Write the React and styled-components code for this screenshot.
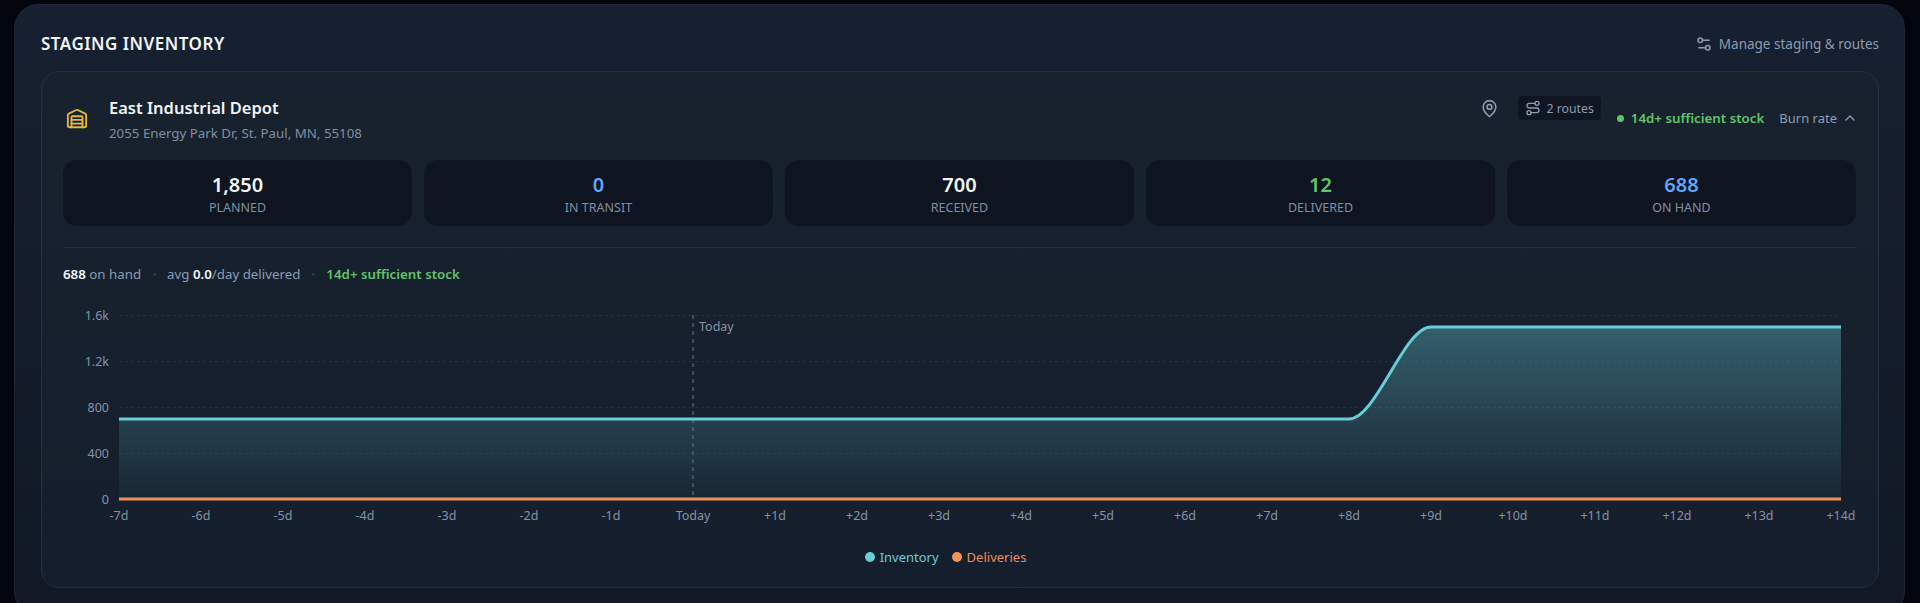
import React from 'react';
import styled, { createGlobalStyle } from 'styled-components';
import { Warehouse, MapPin, Route, ChevronUp, Settings2 } from 'lucide-react';

const GlobalStyle = createGlobalStyle`
  html, body {
    margin: 0;
    height: 603px;
    overflow: hidden;
    background: #02050e;
  }
  body {
    font-family: 'Noto Sans', 'Open Sans', sans-serif;
  }
`;

const Page = styled.div`
  padding: 4px 15px 0 14px;
`;

const Panel = styled.section`
  padding: 0 25px 26px 26px;
  border-radius: 24px;
  border: 1px solid #1c2635;
  background: linear-gradient(180deg, #172030 0%, #111926 100%);
`;

const PanelHeader = styled.header`
  display: flex;
  align-items: center;
  justify-content: space-between;
  box-sizing: border-box;
  height: 66px;
  padding-top: 12px;
`;

const PanelTitle = styled.h2`
  margin: 0;
  font-size: 17px;
  line-height: 24px;
  font-weight: 600;
  letter-spacing: 0.5px;
  color: #f1f5f9;
`;

const ManageLink = styled.a`
  display: flex;
  align-items: center;
  gap: 6px;
  font-size: 13.5px;
  color: #8c9bb0;
`;

const DepotCard = styled.article`
  height: 517px;
  box-sizing: border-box;
  padding: 0 22px 0 21px;
  border-radius: 18px;
  border: 1px solid #232e3f;
  background: linear-gradient(180deg, #18222f 0%, #151e2c 100%);
`;

const DepotHeader = styled.div`
  display: flex;
  justify-content: space-between;
  box-sizing: border-box;
  height: 88px;
`;

const DepotInfo = styled.div`
  display: flex;
  align-items: center;
  gap: 21px;
  padding: 6px 0 0 3px;
  color: #e6b93c;
`;

const DepotName = styled.div`
  font-size: 16.5px;
  line-height: 24px;
  font-weight: 600;
  color: #f1f5f9;
`;

const DepotAddress = styled.div`
  margin-top: 4px;
  font-size: 13.3px;
  line-height: 18px;
  color: #7f8ea3;
`;

const DepotMeta = styled.div`
  display: flex;
  gap: 16px;
  margin-right: -2px;
  padding-top: 24px;
`;

const LocationButton = styled.span`
  display: flex;
  align-items: center;
  height: 24px;
  margin-right: 3px;
  color: #8c9bb0;
`;

const RoutesBadge = styled.span`
  display: flex;
  align-items: center;
  gap: 5px;
  height: 24px;
  padding: 0 7px;
  border-radius: 4px;
  background: #0f1621;
  font-size: 12.3px;
  color: #8c9bb0;
`;

const StockStatus = styled.span`
  display: flex;
  align-items: center;
  gap: 7px;
  height: 24px;
  margin: 10px -1px 0 0;
  font-size: 13.3px;
  font-weight: 600;
  color: #5fc46a;

  &::before {
    content: '';
    width: 7px;
    height: 7px;
    border-radius: 50%;
    background: currentColor;
  }
`;

const BurnToggle = styled.span`
  display: flex;
  align-items: center;
  gap: 5px;
  height: 24px;
  margin-top: 10px;
  font-size: 13px;
  color: #8c9bb0;
`;

const StatGrid = styled.div`
  display: grid;
  grid-template-columns: repeat(5, 1fr);
  gap: 12px;
  padding-bottom: 21px;
  border-bottom: 1px solid #232e3f;
`;

const Stat = styled.div`
  display: flex;
  flex-direction: column;
  align-items: center;
  justify-content: center;
  height: 66px;
  border-radius: 14px;
  background: #0e1520;
`;

const StatValue = styled.div`
  font-size: 20px;
  line-height: 28px;
  font-weight: 600;
  color: ${(p) => p.color || '#f1f5f9'};
`;

const StatLabel = styled.div`
  font-size: 12.5px;
  line-height: 17px;
  color: #7f8ea3;
  text-transform: uppercase;
`;

const Summary = styled.div`
  display: flex;
  align-items: center;
  gap: 11.5px;
  height: 52px;
  font-size: 13.3px;
  color: #8c9bb0;

  b {
    font-weight: 600;
    color: #f1f5f9;
  }
`;

const SummaryDot = styled.i`
  width: 3px;
  height: 3px;
  border-radius: 50%;
  background: #2c3848;
`;

const SummaryGood = styled.span`
  font-weight: 600;
  color: #5fc46a;
`;

const ChartSvg = styled.svg`
  display: block;
  width: 1793px;
  height: 235px;

  text {
    font-family: 'Noto Sans', 'Open Sans', sans-serif;
    font-size: 12.5px;
    fill: #8492a6;
  }
`;

const Legend = styled.div`
  display: flex;
  justify-content: center;
  gap: 13px;
  margin-top: 12px;
  padding-right: 28px;
`;

const LegendItem = styled.span`
  display: flex;
  align-items: center;
  gap: 5px;
  font-size: 13px;
  line-height: 20px;
  color: ${(p) => p.color};

  &::before {
    content: '';
    width: 10px;
    height: 10px;
    border-radius: 50%;
    background: ${(p) => p.dot};
  }
`;

const stats = [
  { value: '1,850', label: 'Planned' },
  { value: '0', label: 'In transit', color: '#60a5fa' },
  { value: '700', label: 'Received' },
  { value: '12', label: 'Delivered', color: '#5fc46a' },
  { value: '688', label: 'On hand', color: '#60a5fa' },
];

const days = [];
for (let d = -7; d <= 14; d++) {
  days.push(d === 0 ? 'Today' : d > 0 ? `+${d}d` : `${d}d`);
}

const yTicks = [
  { value: 1600, label: '1.6k' },
  { value: 1200, label: '1.2k' },
  { value: 800, label: '800' },
  { value: 400, label: '400' },
  { value: 0, label: '0' },
];

const xAt = (i) => 119 + i * 82;
const yAt = (v) => 499.5 - (v / 1600) * 184;

// flat until +8d, then the delivery lands by +9d
const linePath = `M${xAt(0)} ${yAt(700)} H${xAt(15)} C${xAt(15) + 27.3} ${yAt(700)} ${xAt(16) - 27.3} ${yAt(1500)} ${xAt(16)} ${yAt(1500)} H${xAt(21)}`;
const areaPath = `${linePath} V${yAt(0)} H${xAt(0)} Z`;

const InventoryChart = () => (
  <ChartSvg viewBox="63 300 1793 235">
    <defs>
      <linearGradient id="inventoryFill" x1="0" y1="0" x2="0" y2="1">
        <stop offset="0%" stopColor="#67cdd8" stopOpacity="0.36" />
        <stop offset="100%" stopColor="#67cdd8" stopOpacity="0.04" />
      </linearGradient>
    </defs>
    {yTicks.map((t) => (
      <g key={t.label}>
        {t.value > 0 && (
          <line x1={xAt(0)} x2={xAt(21)} y1={yAt(t.value)} y2={yAt(t.value)} stroke="#232d3c" strokeDasharray="3 3" />
        )}
        <text x={109} y={yAt(t.value) + 4} textAnchor="end">{t.label}</text>
      </g>
    ))}
    <path d={areaPath} fill="url(#inventoryFill)" />
    <line x1={xAt(7)} x2={xAt(7)} y1={315} y2={499} stroke="#64748b" strokeDasharray="4 4" />
    <text x={699} y={331}>Today</text>
    <path d={linePath} fill="none" stroke="#67cdd8" strokeWidth="3" />
    <line x1={xAt(0)} x2={xAt(21)} y1={499} y2={499} stroke="#f08c58" strokeWidth="3" />
    {days.map((d, i) => (
      <text key={d} x={xAt(i)} y={520} textAnchor="middle">{d}</text>
    ))}
  </ChartSvg>
);

const App = () => (
  <>
    <GlobalStyle />
    <Page>
      <Panel>
        <PanelHeader>
          <PanelTitle>STAGING INVENTORY</PanelTitle>
          <ManageLink>
            <Settings2 size={18} />
            Manage staging &amp; routes
          </ManageLink>
        </PanelHeader>
        <DepotCard>
          <DepotHeader>
            <DepotInfo>
              <Warehouse size={22} />
              <div>
                <DepotName>East Industrial Depot</DepotName>
                <DepotAddress>2055 Energy Park Dr, St. Paul, MN, 55108</DepotAddress>
              </div>
            </DepotInfo>
            <DepotMeta>
              <LocationButton>
                <MapPin size={19} />
              </LocationButton>
              <RoutesBadge>
                <Route size={16} />
                2 routes
              </RoutesBadge>
              <StockStatus>14d+ sufficient stock</StockStatus>
              <BurnToggle>
                Burn rate
                <ChevronUp size={16} />
              </BurnToggle>
            </DepotMeta>
          </DepotHeader>
          <StatGrid>
            {stats.map((s) => (
              <Stat key={s.label}>
                <StatValue color={s.color}>{s.value}</StatValue>
                <StatLabel>{s.label}</StatLabel>
              </Stat>
            ))}
          </StatGrid>
          <Summary>
            <span><b>688</b> on hand</span>
            <SummaryDot />
            <span>avg <b>0.0</b>/day delivered</span>
            <SummaryDot />
            <SummaryGood>14d+ sufficient stock</SummaryGood>
          </Summary>
          <InventoryChart />
          <Legend>
            <LegendItem color="#67cdd8" dot="#67cdd8">Inventory</LegendItem>
            <LegendItem color="#f08c58" dot="#f5915a">Deliveries</LegendItem>
          </Legend>
        </DepotCard>
      </Panel>
    </Page>
  </>
);

export default App;
